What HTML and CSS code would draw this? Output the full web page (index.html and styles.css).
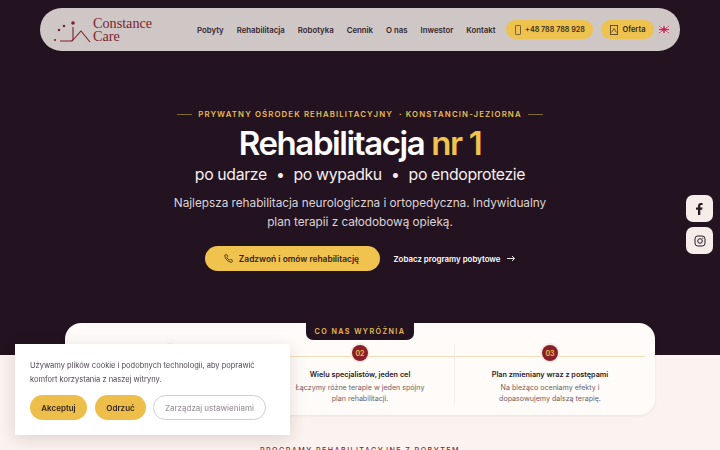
FILE: index.html
```html
<!DOCTYPE html>
<html lang="pl">
<head>
<meta charset="utf-8">
<title>Constance Care</title>
<link rel="stylesheet" href="styles.css">
</head>
<body>
<section class="hero">
  <header class="nav">
    <a class="logo">
      <svg class="logo-mark" width="40" height="26" viewBox="0 0 40 26" fill="none">
        <circle cx="2" cy="22" r="1.100" fill="#7d1f2e"/>
        <circle cx="6" cy="12" r="1.200" fill="#7d1f2e"/>
        <circle cx="11" cy="8" r="1.300" fill="#7d1f2e"/>
        <circle cx="20" cy="5" r="1.800" fill="#7d1f2e"/>
        <path d="M7 23H18Q20 23 20 21V9" stroke="#7d1f2e" stroke-width="1.100"/>
        <path d="M20 22L28 13L37 24" stroke="#7d1f2e" stroke-width="1.100"/>
      </svg>
      <span class="logo-text">Constance<br>Care</span>
    </a>
    <nav class="menu">
      <a>Pobyty</a><a>Rehabilitacja</a><a>Robotyka</a><a>Cennik</a><a>O nas</a><a>Inwestor</a><a>Kontakt</a>
    </nav>
    <a class="chip chip-phone">
      <svg width="6" height="10" viewBox="0 0 6 10" fill="none"><rect x="0.400" y="0.400" width="5.200" height="9.200" rx="1" stroke="#4a3a26" stroke-width="0.800"/></svg>
      +48 788 788 928
    </a>
    <a class="chip chip-offer">
      <svg width="8" height="10" viewBox="0 0 8 10" fill="none"><rect x="0.400" y="0.400" width="7.200" height="9.200" stroke="#4a3a26" stroke-width="0.800"/><path d="M1.500 7.500L4 3.500L6.500 7.500" stroke="#4a3a26" stroke-width="0.800"/></svg>
      Oferta
    </a>
    <svg class="flag" width="10" height="7" viewBox="0 0 10 7">
      <rect width="10" height="7" fill="#e9e4ea"/>
      <path d="M0 0L10 7M10 0L0 7" stroke="#c63a5e" stroke-width="1"/>
      <path d="M5 0V7M0 3.500H10" stroke="#c8264e" stroke-width="1.600"/>
    </svg>
  </header>

  <div class="hero-body">
    <p class="eyebrow"><span class="rule"></span>PRYWATNY OŚRODEK REHABILITACYJNY &nbsp;· KONSTANCIN-JEZIORNA<span class="rule"></span></p>
    <h1>Rehabilitacja <em>nr 1</em></h1>
    <p class="sub">po udarze <i>•</i> po wypadku <i>•</i> po endoprotezie</p>
    <p class="lead">Najlepsza rehabilitacja neurologiczna i ortopedyczna. Indywidualny<br>plan terapii z całodobową opieką.</p>
    <div class="cta">
      <a class="btn-main">
        <svg width="9" height="9" viewBox="0 0 24 24" fill="none" stroke="#3a2a1a" stroke-width="2.200"><path d="M22 17v3a2 2 0 0 1-2.200 2A19.800 19.800 0 0 1 2 4.200 2 2 0 0 1 4 2h3a2 2 0 0 1 2 1.700l.5 3a2 2 0 0 1-.6 1.800L7.600 9.800a16 16 0 0 0 6.600 6.600l1.300-1.300a2 2 0 0 1 1.800-.6l3 .5A2 2 0 0 1 22 17z"/></svg>
        Zadzwoń i omów rehabilitację
      </a>
      <a class="btn-link">Zobacz programy pobytowe <span class="arrow">
        <svg width="8" height="7" viewBox="0 0 8 7" fill="none" stroke="#fff" stroke-width="0.900"><path d="M0 3.500H7.500M5 1L7.500 3.500L5 6"/></svg></span></a>
    </div>
  </div>
</section>

<section class="lower">
  <div class="card">
    <div class="badge">CO NAS WYRÓŻNIA</div>
    <div class="cols">
      <article class="col">
        <span class="num"></span>
      </article>
      <article class="col">
        <span class="num">02</span>
        <h3>Wielu specjalistów, jeden cel</h3>
        <p>Łączymy różne terapie w jeden spójny<br>plan rehabilitacji.</p>
      </article>
      <article class="col">
        <span class="num">03</span>
        <h3>Plan zmieniany wraz z postępami</h3>
        <p>Na bieżąco oceniamy efekty i<br>dopasowujemy dalszą terapię.</p>
      </article>
    </div>
  </div>
  <h2 class="programs">PROGRAMY REHABILITACYJNE Z POBYTEM</h2>
</section>

<aside class="social">
  <a class="soc"><svg width="7" height="12" viewBox="0 0 7 12"><path d="M2 12V6.700H0V4.600H2V3C2 1 3.200 0 4.900 0C5.700 0 6.400.1 6.600.1V2H5.400C4.500 2 4.300 2.500 4.300 3.100V4.600H6.500L6.200 6.700H4.300V12Z" fill="#2a1a26"/></svg></a>
  <a class="soc"><svg width="12" height="12" viewBox="0 0 12 12" fill="none" stroke="#2a1a26"><rect x="1" y="1" width="10" height="10" rx="2.800"/><circle cx="6" cy="6" r="2.300"/><circle cx="8.800" cy="3.200" r=".4" fill="#2a1a26" stroke-width=".4"/></svg></a>
</aside>

<div class="cookie">
  <p>Używamy plików cookie i podobnych technologii, aby poprawić<br>komfort korzystania z naszej witryny.</p>
  <div class="cookie-btns">
    <a class="cbtn cbtn-a">Akceptuj</a>
    <a class="cbtn cbtn-r">Odrzuć</a>
    <a class="cbtn cbtn-m">Zarządzaj ustawieniami</a>
  </div>
</div>
</body>
</html>
```
FILE: styles.css
```css
* { box-sizing: border-box; margin: 0; padding: 0; }
html, body { width: 720px; height: 450px; overflow: hidden; }
body { font-family: "Inter", "Noto Sans", sans-serif; background: #fbf3ef; color: #23131f; }
a { color: inherit; text-decoration: none; }

.hero { height: 355px; background: #23121f; padding-top: 8px; }

.nav {
  width: 640px; height: 43px; margin: 0 auto;
  display: flex; align-items: center;
  padding: 0 11px 0 13px;
  background: #cfc6c6; border-radius: 22px;
}
.logo { display: flex; align-items: center; width: 99px; flex: none; }
.logo-mark { display: block; margin-top: 2px; flex: none; }
.logo-text { font-family: "Liberation Serif", serif; font-size: 14.200px; line-height: 12.500px; color: #7d1f2e; }
.menu { display: flex; gap: 13px; margin-left: 45px; font-size: 7.800px; font-weight: 600; color: #33252f; white-space: nowrap; }
.chip {
  display: flex; align-items: center; justify-content: center; gap: 4px;
  height: 19px; border-radius: 10px; background: #eec24f;
  font-size: 7.200px; font-weight: 600; color: #3a2c20; white-space: nowrap;
}
.chip-phone { width: 87px; margin-left: 11px; flex: none; }
.chip-offer { width: 53px; margin-left: 8px; flex: none; font-size: 7.500px; }
.flag { margin-left: 5px; flex: none; }

.hero-body { display: flex; flex-direction: column; align-items: center; text-align: center; padding-top: 57px; }
.eyebrow {
  display: flex; align-items: center; gap: 6px; height: 12px;
  font-size: 7.800px; font-weight: 600; letter-spacing: 1.130px; color: #e8bd52; white-space: nowrap;
}
.rule { width: 15px; height: 1px; background: #7f6a3b; }
h1 { margin-top: 3px; font-size: 33px; line-height: 40px; font-weight: 600; letter-spacing: -1.400px; color: #fff; }
h1 em { font-style: normal; color: #f0c24e; }
.sub { margin-top: 0; font-size: 15.800px; line-height: 24px; color: #f6eeee; letter-spacing: -.35px; white-space: nowrap; }
.sub i { font-style: normal; margin: 0 5px; }
.lead { margin-top: 7px; font-size: 11.800px; line-height: 18.500px; color: #dcd3d6; letter-spacing: -.03px; }
.cta { display: flex; align-items: center; gap: 13px; margin-top: 15px; }
.btn-main {
  display: flex; align-items: center; justify-content: center; gap: 6px;
  width: 175px; height: 25px; padding-right: 3px; border-radius: 13px; background: #f0c24e;
  font-size: 8.400px; font-weight: 600; color: #33241b;
}
.btn-link { display: flex; align-items: center; gap: 6px; font-size: 7.900px; font-weight: 600; color: #fff; }
.arrow { display: flex; }

.lower { position: relative; height: 95px; }
.card {
  position: relative; width: 590px; height: 92px; margin: -32px auto 0;
  background: #fffbf8; border-radius: 16px;
  box-shadow: 0 1px 3px rgba(80, 40, 40, .08);
}
.badge {
  position: absolute; left: 241px; top: 0; width: 108px; height: 17px;
  display: flex; align-items: center; justify-content: center;
  background: #23121f; border-radius: 0 0 7px 7px;
  font-size: 7.200px; font-weight: 600; letter-spacing: 1.400px; color: #e8bd52; white-space: nowrap;
}
.cols { display: grid; grid-template-columns: repeat(3, 1fr); height: 100%; padding: 21px 10px 0; }
.col {
  position: relative; display: flex; flex-direction: column; align-items: center; text-align: center;
  height: 60px; padding-top: 22px;
}
.col::before { content: ""; position: absolute; left: 0; right: 0; top: 12px; height: 1px; background: #f0dfb8; }
.col::after { content: ""; position: absolute; right: 0; top: 0; bottom: 0; width: 1px; background: #f4eee8; }
.col:last-child::after { display: none; }
.num {
  position: absolute; top: 1px; left: 50%; transform: translateX(-50%);
  width: 16px; height: 16px; border-radius: 50%; background: #8a1f2a;
  box-shadow: 0 0 0 2px #f7ebe6;
  display: flex; align-items: center; justify-content: center;
  font-size: 7px; font-weight: 600; color: #f0c24e;
}
h3 { margin-top: 3px; font-size: 7.250px; line-height: 12px; font-weight: 600; color: #2a1a24; white-space: nowrap; }
.col p { margin-top: 1px; font-size: 7.100px; line-height: 11px; color: #6d5f66; white-space: nowrap; }
.programs {
  margin-top: 30px; text-align: center; font-size: 7.200px; line-height: 12px; font-weight: 500;
  letter-spacing: 1.400px; color: #8a1f2a; white-space: nowrap;
}

.social { position: fixed; right: 7px; top: 195px; display: flex; flex-direction: column; gap: 5px; }
.soc { width: 27px; height: 27px; border-radius: 7px; background: #f6ece9; display: flex; align-items: center; justify-content: center; }

.cookie {
  position: fixed; left: 15px; bottom: 15px; width: 275px; height: 91px;
  padding: 15px; background: #fff; box-shadow: 0 4px 16px rgba(40, 20, 30, .14);
}
.cookie p { font-size: 7.500px; line-height: 13.500px; color: #4e4650; white-space: nowrap; }
.cookie-btns { display: flex; gap: 8px; margin-top: 9px; }
.cbtn {
  display: flex; align-items: center; justify-content: center; height: 25px; border-radius: 13px;
  font-size: 8px; font-weight: 600; color: #33241b; background: #edbe4a; white-space: nowrap;
}
.cbtn-a { width: 57px; }
.cbtn-r { width: 51px; }
.cbtn-m { width: 113px; margin-left: -1px; background: #fff; border: 1px solid #d3cdd2; color: #9f969d; font-weight: 500; font-size: 7.900px; }
```
